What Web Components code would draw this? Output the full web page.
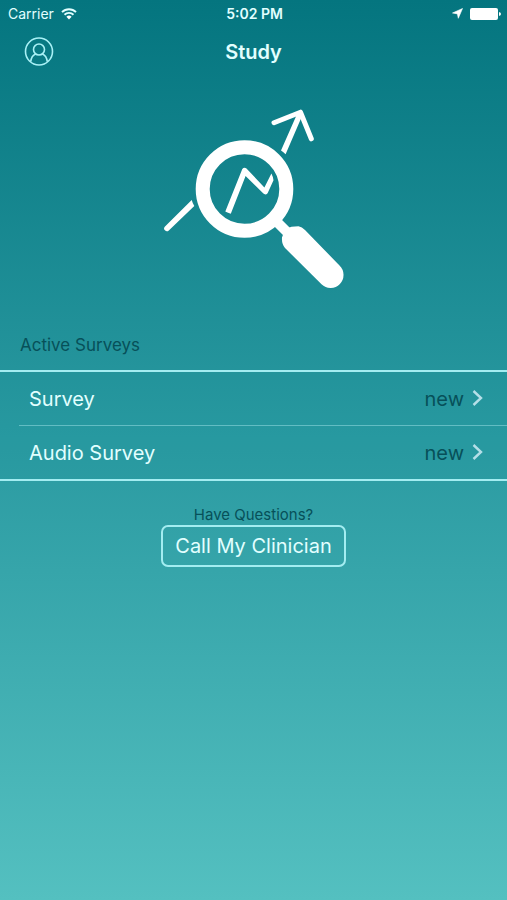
<!DOCTYPE html>
<html lang="en">
<head>
<meta charset="utf-8">
<meta name="viewport" content="width=device-width, initial-scale=1">
<title>Study</title>
<style>
  body{
    margin: 0;
    min-height: 100vh;
    font-family: Inter, "Liberation Sans", sans-serif;
    color: #e2ffff;
    background: linear-gradient(#04757f, #2b9ba2 50%, #54c0c0);
  }
</style>
</head>
<body>
<study-screen></study-screen>

<script>
const statusBarTemplate = document.createElement('template');
statusBarTemplate.innerHTML = `
  <style>
  :host{
    display: grid;
    grid-template-columns: 1fr auto 1fr;
    align-items: center;
    height: 27px;
    padding: 0 6px 0 8px;
    font-size: 14px;
    line-height: 16px;
  }
  .left, .right{
    display: flex;
    align-items: center;
    gap: 7px;
  }
  .right{
    justify-content: flex-end;
  }
  .time{
    font-weight: 600;
  }
  svg{
    display: block;
    fill: #fff;
  }
  </style>
  <div class="left">
    <span><slot name="carrier"></slot></span>
    <svg width="16" height="12" viewBox="0 0 16 12">
      <path d="M8 11.5 5.4 8.8a3.8 3.8 0 0 1 5.2 0z"/>
      <path d="M3.5 6.7a6.4 6.4 0 0 1 9 0M1 4.1a9.9 9.9 0 0 1 14 0" fill="none" stroke="#e2ffff" stroke-width="1.9"/>
    </svg>
  </div>
  <span class="time"><slot name="time"></slot></span>
  <div class="right">
    <svg width="11" height="11" viewBox="0 0 11 11"><path d="M10.5.5 6.3 10.3 5.4 5.9.5 5z" stroke="#fff" stroke-width=".6"/></svg>
    <svg width="31" height="12" viewBox="0 0 31 12">
      <rect width="28" height="12" rx="2"/>
      <path d="M29 4q2 .5 2 2t-2 2z"/>
    </svg>
  </div>
`;

class StatusBar extends HTMLElement{

    constructor(){
        super();
        this.attachShadow({mode: 'open'});
        this.shadowRoot.appendChild(statusBarTemplate.content.cloneNode(true));
    }

}

const navHeaderTemplate = document.createElement('template');
navHeaderTemplate.innerHTML = `
  <style>
  :host{
    display: grid;
    grid-template-columns: 1fr auto 1fr;
    align-items: center;
    height: 49px;
    padding: 0 24px;
  }
  h1{
    margin: 0;
    font-size: 20px;
    line-height: 24px;
    font-weight: 600;
  }
  button{
    justify-self: start;
    padding: 0;
    border: 0;
    background: none;
    color: #a9f1f6;
    cursor: pointer;
  }
  svg{
    display: block;
    fill: none;
    stroke: currentColor;
    stroke-width: 1.6;
  }
  </style>
  <button type="button" aria-label="Profile">
    <svg width="30" height="30" viewBox="0 0 30 30">
      <circle cx="15" cy="14.5" r="13.5"/>
      <circle cx="15" cy="12.5" r="5.5"/>
      <path d="M6.7 24.7c.4-4 2.1-6.6 5-7.8M23.3 24.7c-.4-4-2.1-6.6-5-7.8"/>
    </svg>
  </button>
  <h1><slot></slot></h1>
`;

class NavHeader extends HTMLElement{

    constructor(){
        super();
        this.attachShadow({mode: 'open'});
        this.shadowRoot.appendChild(navHeaderTemplate.content.cloneNode(true));
    }

}

const studyLogoTemplate = document.createElement('template');
studyLogoTemplate.innerHTML = `
  <style>
  :host{
    display: flex;
    justify-content: center;
    padding: 24px 0 35px;
  }
  svg{
    display: block;
    fill: #fff;
    stroke: none;
  }
  .line{
    fill: none;
    stroke: #fff;
    stroke-width: 5;
    stroke-linejoin: round;
  }
  </style>
  <svg width="200" height="200" viewBox="-1 0 200 200">
    <circle class="line" cx="89.5" cy="89" r="41.8" style="stroke-width: 14"/>
    <!-- trend line, cut where it passes under the lens -->
    <path d="M36.7 100 10 126.5A2.7 2.7 0 0 0 13.8 130.4L39.3 106Q37.5 103 36.7 100z"/>
    <path d="M70.3 111.6Q73 113.2 75.8 113.7L90.6 76 108.4 93.6Q110.5 95.4 112.6 93.2L118.5 80.2Q118 76.5 116.4 73.5L109.4 87.4 91.5 68.6Q89.3 66.6 87.3 69z"/>
    <path d="M142.5 13 126 50.5Q128.5 52 130.6 54.3L147.5 15z"/>
    <path class="line" d="M119 22.7 145.5 12.2 156.3 38.8" stroke-linecap="round"/>
    <path class="line" d="M121 121 138 138" style="stroke-width: 10"/>
    <path d="M127 137.5Q129 128.5 136.5 126.8L143.5 126.3Q147 127 150 130L184.5 165.5A13 13 0 0 1 166.5 184.3L130 148Q126.5 144 127 137.5z"/>
  </svg>
`;

class StudyLogo extends HTMLElement{

    constructor(){
        super();
        this.attachShadow({mode: 'open'});
        this.shadowRoot.appendChild(studyLogoTemplate.content.cloneNode(true));
    }

}

const surveyListTemplate = document.createElement('template');
surveyListTemplate.innerHTML = `
  <style>
  :host{
    display: block;
  }
  h2{
    margin: 0;
    padding: 0 20px 14px;
    font-size: 17px;
    line-height: 21px;
    font-weight: 400;
    color: #075059;
  }
  .rows{
    border-top: 2px solid #a3edf1;
    border-bottom: 2px solid #a3edf1;
    background: rgba(30, 145, 155, 0.15);
  }
  </style>
  <h2><slot name="title"></slot></h2>
  <div class="rows"><slot></slot></div>
`;

class SurveyList extends HTMLElement{

    constructor(){
        super();
        this.attachShadow({mode: 'open'});
        this.shadowRoot.appendChild(surveyListTemplate.content.cloneNode(true));
    }

}

const surveyRowTemplate = document.createElement('template');
surveyRowTemplate.innerHTML = `
  <style>
  :host{
    display: block;
    padding-left: 19px;
  }
  a{
    display: flex;
    align-items: center;
    height: 53px;
    padding: 0 24px 0 10px;
    font-size: 20px;
    line-height: 24px;
    color: inherit;
    text-decoration: none;
  }
  :host(:not(:last-of-type)) a{
    border-bottom: 1px solid #62bdc3;
  }
  .name{
    flex: 1;
  }
  .state{
    margin-right: 8px;
    color: #075059;
  }
  svg{
    display: block;
    fill: none;
    stroke: #b5dfe8;
    stroke-width: 2.4;
  }
  </style>
  <a href="#">
    <span class="name"><slot></slot></span>
    <span class="state"><slot name="state"></slot></span>
    <svg width="11" height="17" viewBox="0 0 11 17"><path d="M1.5 1 9 8 1.5 15"/></svg>
  </a>
`;

class SurveyRow extends HTMLElement{

    constructor(){
        super();
        this.attachShadow({mode: 'open'});
        this.shadowRoot.appendChild(surveyRowTemplate.content.cloneNode(true));
    }

}

const callPanelTemplate = document.createElement('template');
callPanelTemplate.innerHTML = `
  <style>
  :host{
    display: flex;
    flex-direction: column;
    align-items: center;
    padding: 24px 20px;
  }
  p{
    margin: 0;
    font-size: 15px;
    line-height: 20px;
    color: #075059;
  }
  button{
    padding: 7px 12px;
    border: 2px solid #a3edf1;
    border-radius: 7px;
    background: none;
    color: inherit;
    font-family: inherit;
    font-size: 20px;
    line-height: 24px;
    cursor: pointer;
  }
  </style>
  <p><slot name="question"></slot></p>
  <button type="button"><slot></slot></button>
`;

class CallPanel extends HTMLElement{

    constructor(){
        super();
        this.attachShadow({mode: 'open'});
        this.shadowRoot.appendChild(callPanelTemplate.content.cloneNode(true));
    }

}

const studyScreenTemplate = document.createElement('template');
studyScreenTemplate.innerHTML = `
  <style>
  :host{
    display: block;
  }
  </style>
  <status-bar>
    <span slot="carrier">Carrier</span>
    <span slot="time">5:02 PM</span>
  </status-bar>
  <nav-header>Study</nav-header>
  <main>
    <study-logo></study-logo>
    <survey-list>
      <span slot="title">Active Surveys</span>
      <survey-row>Survey<span slot="state">new</span></survey-row>
      <survey-row>Audio Survey<span slot="state">new</span></survey-row>
    </survey-list>
    <call-panel>
      <span slot="question">Have Questions?</span>
      Call My Clinician
    </call-panel>
  </main>
`;

class StudyScreen extends HTMLElement{

    constructor(){
        super();
        this.attachShadow({mode: 'open'});
        this.shadowRoot.appendChild(studyScreenTemplate.content.cloneNode(true));
    }

}

window.customElements.define('status-bar', StatusBar);
window.customElements.define('nav-header', NavHeader);
window.customElements.define('study-logo', StudyLogo);
window.customElements.define('survey-list', SurveyList);
window.customElements.define('survey-row', SurveyRow);
window.customElements.define('call-panel', CallPanel);
window.customElements.define('study-screen', StudyScreen);
</script>
</body>
</html>
